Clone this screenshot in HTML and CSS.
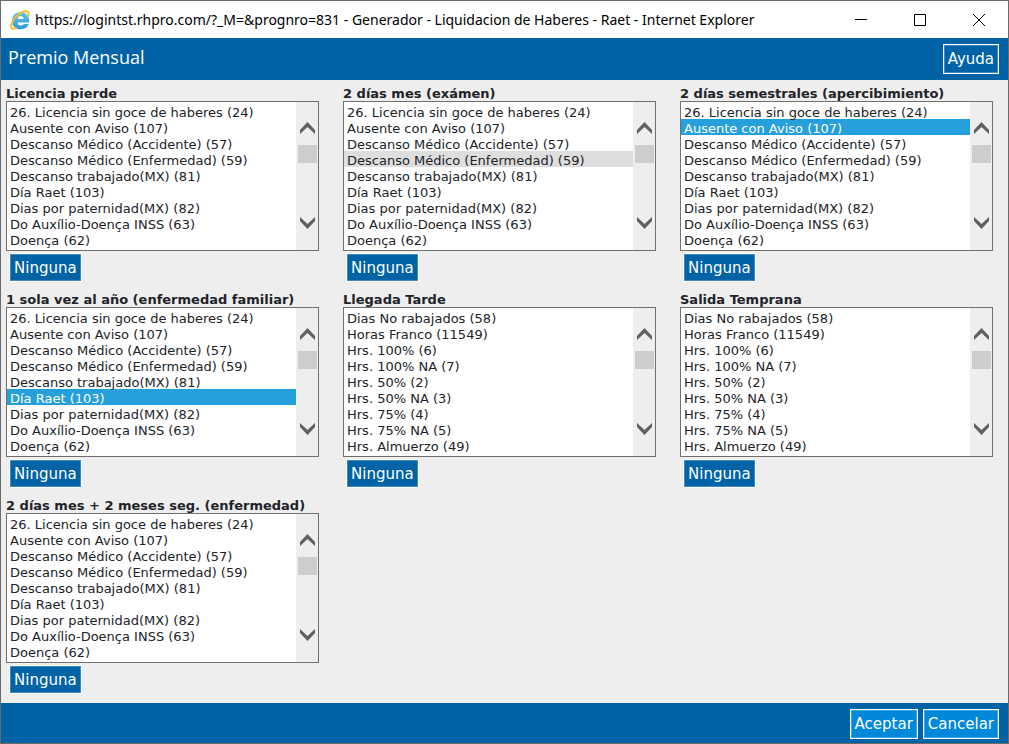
FILE: index.html
```html
<!DOCTYPE html>
<html lang="es">
<head>
<meta charset="utf-8">
<title>Premio Mensual</title>
<link rel="stylesheet" href="styles.css">
</head>
<body>
<svg class="sprite" aria-hidden="true">
  <symbol id="up" viewBox="0 0 15 12"><path d="M0 8 7.500 0 15 8v4L7.500 5 0 12z"/></symbol>
  <symbol id="down" viewBox="0 0 15 12"><path d="M0 0l7.500 7L15 0v4l-7.500 8L0 4z"/></symbol>
</svg>
<div class="window">
  <div class="titlebar">
    <svg class="logo" viewBox="0 0 20 20" aria-hidden="true">
      <defs><linearGradient id="blue" x1="0" y1="0" x2="0" y2="1"><stop offset="0" stop-color="#62c8f2"/><stop offset="1" stop-color="#2f97d8"/></linearGradient></defs>
      <path fill="url(#blue)" fill-rule="evenodd" d="M10.500 2c5.200 0 8.700 3.500 8.700 8.700v1.800H7.500c.2 2 1.500 3 3.500 3 1.400 0 2.300-.5 2.800-1.400h5c-1.100 3.400-4 5.200-8 5.200-5 0-8.800-3-8.800-8.400C2 5.600 5.500 2 10.500 2zM7.600 9h6.100c-.2-1.900-1.200-2.900-3-2.900S7.900 7.100 7.600 9z"/>
      <path fill="none" stroke="#f7bd2c" stroke-width="2" stroke-linecap="round" d="M5.500 17.800c-2.500 1.500-4 1.300-4.300-.3C.6 13.800 4 7.600 9 4c4-3 8.300-3.700 9.400-1.700.5 1 .3 2.200-.4 3.700"/>
    </svg>
    <span class="caption">https://logintst.rhpro.com/?_M=&amp;prognro=831 - Generador - Liquidacion de Haberes - Raet - Internet Explorer</span>
    <div class="controls">
      <button class="control" aria-label="Minimizar"><svg viewBox="0 0 12 12"><path d="M0 5.500h12"/></svg></button>
      <button class="control" aria-label="Maximizar"><svg viewBox="0 0 12 12"><path d="M.5.5h11v11H.5z"/></svg></button>
      <button class="control" aria-label="Cerrar"><svg viewBox="0 0 12 12"><path d="M0 0l12 12M12 0 0 12"/></svg></button>
    </div>
  </div>
  <header class="header">
    <h1 class="heading">Premio Mensual</h1>
    <button class="button">Ayuda</button>
  </header>
  <main class="groups">
    <section class="group">
      <label class="label" for="l1">Licencia pierde</label>
      <div class="box">
        <select class="list" id="l1" size="9"><option>26. Licencia sin goce de haberes (24)</option><option>Ausente con Aviso (107)</option><option>Descanso Médico (Accidente) (57)</option><option>Descanso Médico (Enfermedad) (59)</option><option>Descanso trabajado(MX) (81)</option><option>Día Raet (103)</option><option>Dias por paternidad(MX) (82)</option><option>Do Auxílio-Doença INSS (63)</option><option>Doença (62)</option></select>
        <div class="scroll" aria-hidden="true"><svg class="arrow"><use href="#up"/></svg><div class="track"><div class="thumb"></div></div><svg class="arrow"><use href="#down"/></svg></div>
      </div>
      <button class="button none">Ninguna</button>
    </section>
    <section class="group">
      <label class="label" for="l2">2 días mes (exámen)</label>
      <div class="box">
        <select class="list muted" id="l2" size="9"><option>26. Licencia sin goce de haberes (24)</option><option>Ausente con Aviso (107)</option><option>Descanso Médico (Accidente) (57)</option><option selected>Descanso Médico (Enfermedad) (59)</option><option>Descanso trabajado(MX) (81)</option><option>Día Raet (103)</option><option>Dias por paternidad(MX) (82)</option><option>Do Auxílio-Doença INSS (63)</option><option>Doença (62)</option></select>
        <div class="scroll" aria-hidden="true"><svg class="arrow"><use href="#up"/></svg><div class="track"><div class="thumb"></div></div><svg class="arrow"><use href="#down"/></svg></div>
      </div>
      <button class="button none">Ninguna</button>
    </section>
    <section class="group">
      <label class="label" for="l3">2 días semestrales (apercibimiento)</label>
      <div class="box">
        <select class="list" id="l3" size="9"><option>26. Licencia sin goce de haberes (24)</option><option selected>Ausente con Aviso (107)</option><option>Descanso Médico (Accidente) (57)</option><option>Descanso Médico (Enfermedad) (59)</option><option>Descanso trabajado(MX) (81)</option><option>Día Raet (103)</option><option>Dias por paternidad(MX) (82)</option><option>Do Auxílio-Doença INSS (63)</option><option>Doença (62)</option></select>
        <div class="scroll" aria-hidden="true"><svg class="arrow"><use href="#up"/></svg><div class="track"><div class="thumb"></div></div><svg class="arrow"><use href="#down"/></svg></div>
      </div>
      <button class="button none">Ninguna</button>
    </section>
    <section class="group">
      <label class="label" for="l4">1 sola vez al año (enfermedad familiar)</label>
      <div class="box">
        <select class="list" id="l4" size="9"><option>26. Licencia sin goce de haberes (24)</option><option>Ausente con Aviso (107)</option><option>Descanso Médico (Accidente) (57)</option><option>Descanso Médico (Enfermedad) (59)</option><option>Descanso trabajado(MX) (81)</option><option selected>Día Raet (103)</option><option>Dias por paternidad(MX) (82)</option><option>Do Auxílio-Doença INSS (63)</option><option>Doença (62)</option></select>
        <div class="scroll" aria-hidden="true"><svg class="arrow"><use href="#up"/></svg><div class="track"><div class="thumb"></div></div><svg class="arrow"><use href="#down"/></svg></div>
      </div>
      <button class="button none">Ninguna</button>
    </section>
    <section class="group">
      <label class="label" for="l5">Llegada Tarde</label>
      <div class="box">
        <select class="list" id="l5" size="9"><option>Dias No rabajados (58)</option><option>Horas Franco (11549)</option><option>Hrs. 100% (6)</option><option>Hrs. 100% NA (7)</option><option>Hrs. 50% (2)</option><option>Hrs. 50% NA (3)</option><option>Hrs. 75% (4)</option><option>Hrs. 75% NA (5)</option><option>Hrs. Almuerzo (49)</option></select>
        <div class="scroll" aria-hidden="true"><svg class="arrow"><use href="#up"/></svg><div class="track"><div class="thumb"></div></div><svg class="arrow"><use href="#down"/></svg></div>
      </div>
      <button class="button none">Ninguna</button>
    </section>
    <section class="group">
      <label class="label" for="l6">Salida Temprana</label>
      <div class="box">
        <select class="list" id="l6" size="9"><option>Dias No rabajados (58)</option><option>Horas Franco (11549)</option><option>Hrs. 100% (6)</option><option>Hrs. 100% NA (7)</option><option>Hrs. 50% (2)</option><option>Hrs. 50% NA (3)</option><option>Hrs. 75% (4)</option><option>Hrs. 75% NA (5)</option><option>Hrs. Almuerzo (49)</option></select>
        <div class="scroll" aria-hidden="true"><svg class="arrow"><use href="#up"/></svg><div class="track"><div class="thumb"></div></div><svg class="arrow"><use href="#down"/></svg></div>
      </div>
      <button class="button none">Ninguna</button>
    </section>
    <section class="group">
      <label class="label" for="l7">2 días mes + 2 meses seg. (enfermedad)</label>
      <div class="box">
        <select class="list" id="l7" size="9"><option>26. Licencia sin goce de haberes (24)</option><option>Ausente con Aviso (107)</option><option>Descanso Médico (Accidente) (57)</option><option>Descanso Médico (Enfermedad) (59)</option><option>Descanso trabajado(MX) (81)</option><option>Día Raet (103)</option><option>Dias por paternidad(MX) (82)</option><option>Do Auxílio-Doença INSS (63)</option><option>Doença (62)</option></select>
        <div class="scroll" aria-hidden="true"><svg class="arrow"><use href="#up"/></svg><div class="track"><div class="thumb"></div></div><svg class="arrow"><use href="#down"/></svg></div>
      </div>
      <button class="button none">Ninguna</button>
    </section>
  </main>
  <footer class="footer">
    <button class="button bright">Aceptar</button>
    <button class="button bright">Cancelar</button>
  </footer>
</div>
</body>
</html>
```

FILE: styles.css
```css
* {
  box-sizing: border-box;
}

body {
  margin: 0;
  background: #eee;
  color: #212328;
  font-family: Verdana, "DejaVu Sans", sans-serif;
  font-size: 13px;
}

.sprite {
  display: none;
}

.window {
  display: flex;
  flex-direction: column;
  min-height: 100vh;
  border: 1px solid #6b6b6b;
}

.titlebar {
  display: flex;
  align-items: center;
  height: 37px;
  padding-left: 9px;
  background: #fff;
  color: #000;
  font-family: "Segoe UI", "Noto Sans", sans-serif;
  font-size: 14px;
}

.logo {
  width: 20px;
  height: 20px;
  margin-right: 5px;
  flex: none;
}

.caption {
  flex: 1;
  white-space: nowrap;
  overflow: hidden;
}

.controls {
  display: flex;
}

.control {
  display: flex;
  align-items: center;
  justify-content: center;
  width: 59px;
  height: 36px;
  padding: 0;
  border: 0;
  background: none;
}

.control svg {
  width: 12px;
  height: 12px;
  fill: none;
  stroke: #000;
}

.header {
  display: flex;
  align-items: center;
  justify-content: space-between;
  height: 42px;
  padding: 0 9px 0 7px;
  background: #0063a6;
}

.heading {
  margin: 0 0 5px;
  color: #fff;
  font-family: "Segoe UI", "Open Sans", sans-serif;
  font-size: 18px;
  font-weight: 400;
}

.groups {
  flex: 1;
  display: grid;
  grid-template-columns: repeat(3, minmax(0, 1fr));
  align-content: start;
  gap: 9px 24px;
  padding: 5px 15px 7px 5px;
}

.group {
  display: flex;
  flex-direction: column;
  align-items: flex-start;
}

.label {
  padding-top: 2px;
  font-weight: 700;
  line-height: 14px;
  white-space: nowrap;
}

.box {
  display: flex;
  width: 100%;
  height: 150px;
  margin-bottom: 2px;
  border: 1px solid #707070;
  background: #fff;
}

.list {
  flex: 1;
  min-width: 0;
  height: 148px;
  padding: 1px 0;
  border: 0;
  border-radius: 0;
  outline: 0;
  background: #fff;
  color: #212328;
  font: inherit;
  scrollbar-width: none;
}

.list option {
  height: 16px;
  min-height: 16px;
  padding: 2px 3px 0;
  line-height: 14px;
}

.list option:checked {
  background: linear-gradient(#26a0da, #26a0da);
  -webkit-text-fill-color: #fff;
}

.muted option:checked {
  background: linear-gradient(#dedede, #dedede);
  -webkit-text-fill-color: #212328;
}

.scroll {
  display: flex;
  flex-direction: column;
  align-items: center;
  width: 22px;
  padding: 20px 0 21px;
  background: #eee;
}

.arrow {
  width: 15px;
  height: 12px;
  fill: #606060;
}

.track {
  flex: 1;
  padding-top: 11px;
}

.thumb {
  width: 19px;
  height: 18px;
  background: #cdcdcd;
}

.button {
  height: 30px;
  padding: 0 4px;
  border: 1px solid #fff;
  background: #0063a6;
  box-shadow: inset 0 0 0 1px rgba(255, 255, 255, 0.25);
  color: #fff;
  font-family: Verdana, "DejaVu Sans", sans-serif;
  font-size: 15px;
}

.none {
  height: 29px;
  margin-left: 3px;
}

.bright {
  background: #0088da;
}

.footer {
  display: flex;
  align-items: center;
  justify-content: flex-end;
  gap: 5px;
  height: 40px;
  padding: 2px 9px 0 0;
  background: #0063a6;
}
```
